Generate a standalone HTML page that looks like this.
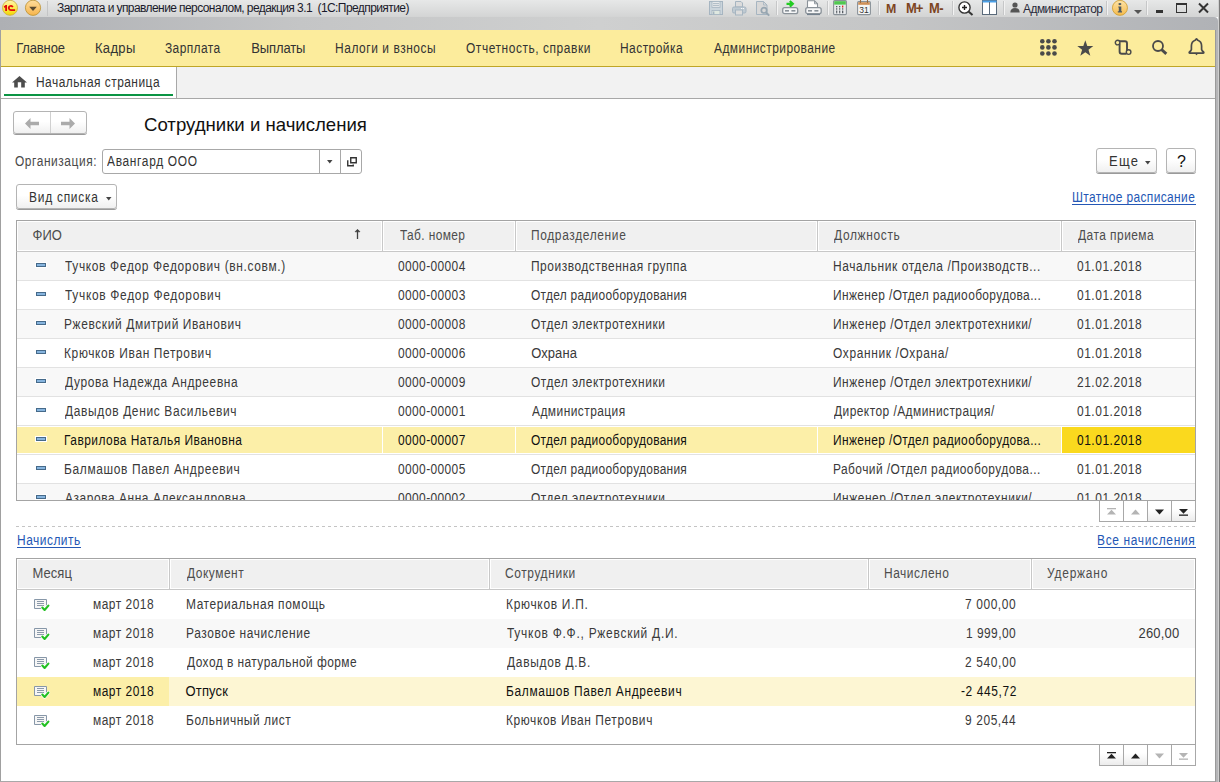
<!DOCTYPE html><html><head><meta charset="utf-8"><style>
*{box-sizing:border-box}
html,body{margin:0;padding:0}
body{width:1220px;height:782px;overflow:hidden;position:relative;background:#fff;font-family:"Liberation Sans",sans-serif}
.t{position:absolute;white-space:nowrap;line-height:15px}
.s{transform:scale(0.92,1.1);transform-origin:0 12px}
.s1{transform:scaleY(1.1);transform-origin:0 12px}
.a{position:absolute}
svg{position:absolute;overflow:visible}
</style></head><body>
<div style="position:absolute;left:0px;top:0px;width:1219px;height:17px;background:linear-gradient(#e7e8e8,#d3d4d4)"></div>
<div style="position:absolute;left:0px;top:17px;width:1218px;height:13px;background:linear-gradient(90deg,#aeb0b4 0px,#c4c5c6 300px,#cfd0d0 600px,#c4c5c6 900px,#b0b2b6 100%);border-top-right-radius:4px"></div>
<svg style="left:0;top:0" width="42" height="18" viewBox="0 0 42 18"><defs><linearGradient id="g1" x1="0" y1="0" x2="0" y2="1"><stop offset="0" stop-color="#fff6b0"/><stop offset="0.55" stop-color="#fbe94a"/><stop offset="1" stop-color="#f3d400"/></linearGradient><linearGradient id="g2" x1="0" y1="0" x2="0" y2="1"><stop offset="0" stop-color="#fddc9c"/><stop offset="1" stop-color="#f7b54c"/></linearGradient></defs><circle cx="10" cy="7.8" r="7.5" fill="url(#g1)" stroke="#cdb248" stroke-width="0.9"/><path d="M3.8 6.5 L5.6 5.1 H7 V10.9 H5.2 V7.3 L4.4 7.9 Z" fill="#e00a0a"/><path d="M12.8 7.1 A2.1 2.1 0 1 0 11 10.1 H15.1" stroke="#e00a0a" stroke-width="1.8" fill="none"/><circle cx="33" cy="7.8" r="7.6" fill="url(#g2)" stroke="#bf973c" stroke-width="0.9"/><path d="M29.2 6.8 L36.8 6.8 L33 10.9 Z" fill="#594a30"/></svg>
<div style="position:absolute;left:47px;top:1px;width:1px;height:15px;background:#c4c5c6"></div>
<div class="t" style="left:57px;top:1px;font-size:12px;color:#1a1a2a;letter-spacing:-0.58px">Зарплата и управление персоналом, редакция 3.1&nbsp;&nbsp;(1С:Предприятие)</div>
<div style="position:absolute;left:1px;top:30px;width:1214px;height:36px;background:#fcec9c"></div>
<div style="position:absolute;left:1px;top:66px;width:1214px;height:1px;background:#bfa626"></div>
<div class="t s1" style="left:16.2px;top:41px;font-size:13px;color:#333;letter-spacing:-0.150px;">Главное</div>
<div class="t s1" style="left:94.9px;top:41px;font-size:13px;color:#333;letter-spacing:0.350px;">Кадры</div>
<div class="t s" style="left:165.18px;top:41px;font-size:13px;color:#333;letter-spacing:0.432px;">Зарплата</div>
<div class="t s1" style="left:251.3px;top:41px;font-size:13px;color:#333;letter-spacing:-0.133px;">Выплаты</div>
<div class="t s" style="left:335.48px;top:41px;font-size:13px;color:#333;letter-spacing:0.599px;">Налоги и взносы</div>
<div class="t s" style="left:466.08px;top:41px;font-size:13px;color:#333;letter-spacing:0.607px;">Отчетность, справки</div>
<div class="t s" style="left:620.18px;top:41px;font-size:13px;color:#333;letter-spacing:0.508px;">Настройка</div>
<div class="t s" style="left:714.0px;top:41px;font-size:13px;color:#333;letter-spacing:0.484px;">Администрирование</div>
<div style="position:absolute;left:1px;top:67px;width:1214px;height:31px;background:#f2f2f2"></div>
<div style="position:absolute;left:1px;top:67px;width:175px;height:31px;background:#fff"></div>
<div style="position:absolute;left:176px;top:67px;width:1px;height:31px;background:#a8a8a8"></div>
<div style="position:absolute;left:1px;top:98px;width:1214px;height:1px;background:#a8a8a8"></div>
<div style="position:absolute;left:4px;top:94px;width:169px;height:2px;background:#0b9444"></div>
<div class="t s" style="left:36.28px;top:75px;font-size:13px;color:#333;letter-spacing:0.499px;">Начальная страница</div>
<svg style="left:12px;top:76px" width="16" height="12" viewBox="0 0 16 12"><path d="M0 6.6 L7.5 0 L15 6.6 H12.8 V11.6 H9.2 V6.2 H5.8 V11.6 H2.2 V6.6 Z" fill="#4d4d4d"/></svg><div style="position:absolute;left:0px;top:30px;width:1px;height:752px;background:#a0a0a0"></div>
<div style="position:absolute;left:0px;top:781px;width:1220px;height:1px;background:#a8a8a8"></div>
<div style="position:absolute;left:1215px;top:30px;width:1px;height:752px;background:#9a9a9a"></div>
<div style="position:absolute;left:1216px;top:30px;width:2px;height:752px;background:#b5b5b7"></div>
<div style="position:absolute;left:1218px;top:0px;width:1px;height:782px;background:#cfcfcf"></div>
<div style="position:absolute;left:1219px;top:0px;width:1px;height:782px;background:#7a7a7a"></div>
<svg style="left:709px;top:1px" width="14" height="14" viewBox="0 0 14 14"><rect x="0.5" y="0.5" width="13" height="13" fill="#cbd5dc" stroke="#a6b5c1"/><rect x="3" y="0.5" width="8" height="6" fill="#e6e9eb" stroke="#a6b5c1" stroke-width="0.8"/><path d="M4 2.6 H10 M4 4.6 H10" stroke="#a6b5c1" stroke-width="0.9"/><rect x="3" y="9.5" width="8" height="4" fill="#dfe8e0" stroke="#a6b5c1" stroke-width="0.8"/><rect x="4" y="10.5" width="1.4" height="3" fill="#a6b5c1"/></svg><svg style="left:732px;top:1px" width="15" height="15" viewBox="0 0 15 15"><path d="M3.5 0.5 H9 L10.5 2 V6 H3.5 Z" fill="#dcdcdc" stroke="#a6b5c1"/><rect x="0.5" y="6" width="13.5" height="6" rx="1.5" fill="#bfcad2" stroke="#a6b5c1"/><rect x="3.5" y="9" width="7" height="5" fill="#dcdcdc" stroke="#a6b5c1"/><rect x="9" y="7" width="1.2" height="0.9" fill="#fff"/><rect x="10.8" y="7" width="1.2" height="0.9" fill="#fff"/></svg><svg style="left:756px;top:1px" width="15" height="16" viewBox="0 0 15 16"><path d="M0.5 0.5 H7.5 L11 4 V13.5 H0.5 Z" fill="#d8d8d8" stroke="#a6b5c1"/><path d="M7.5 0.5 V4 H11" fill="none" stroke="#a6b5c1" stroke-width="0.8"/><circle cx="8" cy="9.3" r="2.7" fill="#d8d8d8" stroke="#97a6b1" stroke-width="1.7"/><path d="M9.8 11.2 L13.2 14.6" stroke="#97a6b1" stroke-width="2"/></svg><div style="position:absolute;left:776px;top:1px;width:1px;height:14px;background:#c6c7c8;box-shadow:1px 0 0 #f2f2f2"></div>
<svg style="left:782px;top:0px" width="17" height="16" viewBox="0 0 17 16"><path d="M4.5 3.8 H10 M7.8 1 L10.8 3.8 L7.8 6.6" stroke="#22cc22" stroke-width="2.2" fill="none"/><rect x="0.7" y="7.7" width="15" height="6" rx="2" fill="#f4f5f6" stroke="#8a9299" stroke-width="1.3"/><rect x="3" y="10" width="4" height="1.6" fill="#8a9299"/><rect x="9.4" y="10" width="4" height="1.6" fill="#8a9299"/></svg><svg style="left:805px;top:0px" width="17" height="16" viewBox="0 0 17 16"><path d="M2.5 0.8 H9.5 L12.5 3.8 V8 H2.5 Z" fill="#fff" stroke="#8a9299" stroke-width="1.1"/><path d="M9.5 0.8 V3.8 H12.5" fill="none" stroke="#8a9299" stroke-width="0.9"/><rect x="0.7" y="7.7" width="15.5" height="6" rx="2" fill="#f4f5f6" stroke="#8a9299" stroke-width="1.3"/><rect x="3" y="10" width="4" height="1.6" fill="#8a9299"/><rect x="9.4" y="10" width="4" height="1.6" fill="#8a9299"/><path d="M2 14.6 H15" stroke="#6a7a88" stroke-width="1"/></svg><div style="position:absolute;left:827px;top:1px;width:1px;height:14px;background:#c6c7c8;box-shadow:1px 0 0 #f2f2f2"></div>
<svg style="left:833px;top:0px" width="14" height="16" viewBox="0 0 14 16"><rect x="0.6" y="0.6" width="12.8" height="14" rx="1" fill="#e8eaec" stroke="#8a9299" stroke-width="1.1"/><rect x="1.2" y="1.2" width="11.6" height="3.4" fill="#50c850"/><g fill="#555b62"><rect x="3" y="6" width="1.3" height="1.3"/><rect x="6" y="6" width="1.3" height="1.3"/><rect x="3" y="8.3" width="1.3" height="1.3"/><rect x="6" y="8.3" width="1.3" height="1.3"/><rect x="9" y="8.3" width="1.3" height="1.3"/><rect x="3" y="10.6" width="1.3" height="1.3"/><rect x="6" y="10.6" width="1.3" height="1.3"/><rect x="9" y="10.6" width="1.3" height="2.6"/><rect x="3" y="12.2" width="1.3" height="1.1"/><rect x="6" y="12.2" width="1.3" height="1.1"/></g><rect x="9" y="5.6" width="1.3" height="1.9" fill="#e02020"/></svg><svg style="left:857px;top:0px" width="14" height="16" viewBox="0 0 14 16"><rect x="0.6" y="1.6" width="12.8" height="13" rx="1" fill="#f6f6f6" stroke="#8a9299" stroke-width="1.1"/><rect x="1.2" y="2.2" width="11.6" height="2.6" fill="#cf9058"/><path d="M3.5 0 V3 M10.5 0 V3" stroke="#9a6a40" stroke-width="1.1"/><text x="7" y="13" font-size="8.5" font-family="Liberation Sans" text-anchor="middle" fill="#333">31</text></svg><div style="position:absolute;left:878px;top:1px;width:1px;height:14px;background:#c6c7c8;box-shadow:1px 0 0 #f2f2f2"></div>
<div class="t s1" style="left:886px;top:1px;font-size:13px;color:#7d4522;font-weight:bold;transform:scaleX(0.95);transform-origin:0 0">M</div>
<div class="t s1" style="left:906px;top:1px;font-size:13px;color:#7d4522;font-weight:bold;letter-spacing:-1px">M+</div>
<div class="t s1" style="left:929px;top:1px;font-size:13px;color:#7d4522;font-weight:bold;letter-spacing:-0.5px">M-</div>
<div style="position:absolute;left:952px;top:1px;width:1px;height:14px;background:#c6c7c8;box-shadow:1px 0 0 #f2f2f2"></div>
<svg style="left:958px;top:1px" width="16" height="15" viewBox="0 0 16 15"><circle cx="6.5" cy="6.5" r="5.6" fill="#fff" stroke="#333" stroke-width="1.4"/><path d="M4 6.5 H9 M6.5 4 V9" stroke="#222" stroke-width="1.4"/><path d="M10.5 10.5 L14.5 14" stroke="#333" stroke-width="2"/></svg><svg style="left:982px;top:0px" width="15" height="15" viewBox="0 0 15 15"><rect x="0.5" y="0.5" width="14" height="14" fill="#fff" stroke="#5a6a7a"/><rect x="0.5" y="0.5" width="14" height="2" fill="#4aa0e8"/><path d="M7.5 2 V14.5" stroke="#5a6a7a"/></svg><div style="position:absolute;left:1003px;top:1px;width:1px;height:14px;background:#c6c7c8;box-shadow:1px 0 0 #f2f2f2"></div>
<svg style="left:1010px;top:2px" width="10" height="11" viewBox="0 0 10 11"><circle cx="5" cy="3" r="2.6" fill="#555"/><path d="M0.3 10.5 Q0.5 6 5 6 Q9.5 6 9.7 10.5 Z" fill="#555"/></svg><div class="t" style="left:1023px;top:2px;font-size:12px;color:#2a2a3a;letter-spacing:-0.55px">Администратор</div>
<div style="position:absolute;left:1106px;top:1px;width:1px;height:14px;background:#c6c7c8;box-shadow:1px 0 0 #f2f2f2"></div>
<svg style="left:1112px;top:0px" width="17" height="17" viewBox="0 0 17 17"><defs><linearGradient id="g3" x1="0" y1="0" x2="0" y2="1"><stop offset="0" stop-color="#fde3a8"/><stop offset="1" stop-color="#f6bb4c"/></linearGradient></defs><circle cx="7.95" cy="7.85" r="7.5" fill="url(#g3)" stroke="#cfa23a" stroke-width="0.9"/><ellipse cx="7.9" cy="4.1" rx="1.5" ry="1.1" fill="#4e5a62"/><path d="M6.3 6.6 H9.3 V11.3 H10 V12.6 H5.8 V11.3 H6.8 V7.6 H6.3 Z" fill="#4e5a62"/></svg><svg style="left:1134px;top:10px" width="9" height="5" viewBox="0 0 9 5"><path d="M0 0 H8 L4 4 Z" fill="#555"/></svg><div style="position:absolute;left:1146px;top:1px;width:1px;height:14px;background:#c6c7c8;box-shadow:1px 0 0 #f2f2f2"></div>
<div style="position:absolute;left:1156px;top:10px;width:7px;height:3px;background:#333"></div>
<div style="position:absolute;left:1176px;top:3px;width:11px;height:10px;border:1.5px solid #333;border-top-width:2px"></div>
<svg style="left:1198px;top:3px" width="11" height="10" viewBox="0 0 11 10"><path d="M1 0.5 L10 9.5 M10 0.5 L1 9.5" stroke="#333" stroke-width="2"/></svg><svg style="left:1040px;top:39px" width="17" height="17" viewBox="0 0 17 17"><circle cx="2.3" cy="2.3" r="2.3" fill="#4a4a4a"/><circle cx="2.3" cy="8.399999999999999" r="2.3" fill="#4a4a4a"/><circle cx="2.3" cy="14.5" r="2.3" fill="#4a4a4a"/><circle cx="8.399999999999999" cy="2.3" r="2.3" fill="#4a4a4a"/><circle cx="8.399999999999999" cy="8.399999999999999" r="2.3" fill="#4a4a4a"/><circle cx="8.399999999999999" cy="14.5" r="2.3" fill="#4a4a4a"/><circle cx="14.5" cy="2.3" r="2.3" fill="#4a4a4a"/><circle cx="14.5" cy="8.399999999999999" r="2.3" fill="#4a4a4a"/><circle cx="14.5" cy="14.5" r="2.3" fill="#4a4a4a"/></svg><svg style="left:1077px;top:40px" width="17" height="17" viewBox="0 0 17 17"><path d="M8.3 0.3 L10.3 6 L16.3 6.1 L11.5 9.8 L13.3 15.8 L8.3 12.2 L3.3 15.8 L5.1 9.8 L0.3 6.1 L6.3 6 Z" fill="#4a4a4a"/></svg><svg style="left:1114px;top:39px" width="18" height="17" viewBox="0 0 18 17"><path d="M4 2.3 H11 Q13 2.3 13 4.3 V11.5" fill="none" stroke="#4a4a4a" stroke-width="1.9"/><path d="M5.6 4.5 V12.5 Q5.6 14.8 7.8 14.8 H12.5" fill="none" stroke="#4a4a4a" stroke-width="1.9"/><circle cx="3.6" cy="3.6" r="2.3" fill="#fcec9c" stroke="#4a4a4a" stroke-width="1.4"/><circle cx="14.6" cy="13.1" r="2.3" fill="#fcec9c" stroke="#4a4a4a" stroke-width="1.4"/></svg><svg style="left:1152px;top:40px" width="16" height="16" viewBox="0 0 16 16"><circle cx="6" cy="6" r="5" fill="none" stroke="#4a4a4a" stroke-width="1.8"/><path d="M9.5 9.5 L14.3 13.8" stroke="#4a4a4a" stroke-width="3"/></svg><svg style="left:1189px;top:38px" width="16" height="18" viewBox="0 0 16 18"><path d="M7.5 0.8 L8.8 2.2 Q12.6 3.3 12.6 8 V11.5 Q13 13 14.6 14 Q15.2 15 14 15.2 H1 Q-0.2 15 0.4 14 Q2 13 2.4 11.5 V8 Q2.4 3.3 6.2 2.2 Z" fill="none" stroke="#4a4a4a" stroke-width="1.7" stroke-linejoin="round"/><path d="M5.8 15.5 L7.5 17.2 L9.2 15.5 Z" fill="#4a4a4a"/></svg><div style="position:absolute;left:13px;top:111px;width:74px;height:23px;border:1px solid #b4b4b4;border-radius:3px;background:linear-gradient(#fff 0%,#fff 45%,#f0f0f0 100%);box-shadow:0 1px 0 #9a9a9a"></div>
<div style="position:absolute;left:50px;top:112px;width:1px;height:21px;background:#d0d0d0"></div>
<svg style="left:25px;top:118px" width="15" height="11" viewBox="0 0 15 11"><path d="M0 5.5 L5.5 0 V3.8 H14 V7.2 H5.5 V11 Z" fill="#ababab"/></svg><svg style="left:60px;top:118px" width="15" height="11" viewBox="0 0 15 11"><path d="M15 5.5 L9.5 0 V3.8 H1 V7.2 H9.5 V11 Z" fill="#ababab"/></svg><div class="t" style="left:144px;top:114px;font-size:18.6px;color:#111;line-height:21px">Сотрудники и начисления</div>
<div class="t s" style="left:15.38px;top:154px;font-size:13px;color:#4a4a4a;letter-spacing:0.603px;">Организация:</div>
<div style="position:absolute;left:102px;top:149px;width:260px;height:25px;border:1px solid #a8a8a8;border-radius:3px;background:#fff"></div>
<div style="position:absolute;left:319px;top:150px;width:1px;height:23px;background:#a8a8a8"></div>
<div style="position:absolute;left:340px;top:150px;width:1px;height:23px;background:#a8a8a8"></div>
<div class="t s" style="left:106.6px;top:154px;font-size:13px;color:#333;letter-spacing:0.721px;">Авангард ООО</div>
<svg style="left:327px;top:160px" width="6" height="4" viewBox="0 0 6 4"><path d="M0 0 H5.5 L2.75 3.5 Z" fill="#444"/></svg><svg style="left:347px;top:157px" width="10" height="10" viewBox="0 0 10 10"><path d="M3.75 0.75 H9.25 V5.75 H3.75 Z M0.75 3.2 V8.75 H6.25 V7.6" fill="none" stroke="#333" stroke-width="1.4"/></svg><div style="position:absolute;left:16px;top:184px;width:101px;height:25px;border:1px solid #b4b4b4;border-radius:3px;background:linear-gradient(#fff 0%,#fff 45%,#f0f0f0 100%);box-shadow:0 1px 0 #9a9a9a"></div>
<div class="t s" style="left:29.18px;top:190px;font-size:13px;color:#333;letter-spacing:0.804px;">Вид списка</div>
<svg style="left:106px;top:197px" width="6" height="4" viewBox="0 0 6 4"><path d="M0 0 H5.5 L2.75 3.5 Z" fill="#444"/></svg><div style="position:absolute;left:1096px;top:148px;width:61px;height:25px;border:1px solid #b4b4b4;border-radius:3px;background:linear-gradient(#fff 0%,#fff 45%,#f0f0f0 100%);box-shadow:0 1px 0 #9a9a9a"></div>
<div class="t s1" style="left:1109.0px;top:154px;font-size:13px;color:#333;letter-spacing:1.250px;">Еще</div>
<svg style="left:1145px;top:161px" width="6" height="4" viewBox="0 0 6 4"><path d="M0 0 H5.5 L2.75 3.5 Z" fill="#444"/></svg><div style="position:absolute;left:1166px;top:148px;width:30px;height:25px;border:1px solid #b4b4b4;border-radius:3px;background:linear-gradient(#fff 0%,#fff 45%,#f0f0f0 100%);box-shadow:0 1px 0 #9a9a9a"></div>
<div class="t" style="left:1177px;top:153px;font-size:16px;color:#111;line-height:18px">?</div>
<div class="t s" style="left:1071.68px;top:190px;font-size:13px;color:#2457b5;letter-spacing:0.409px;">Штатное расписание</div>
<div style="position:absolute;left:1072px;top:204px;width:124px;height:1px;background:#2457b5"></div>
<div style="position:absolute;left:16px;top:220px;width:1180px;height:32px;border:1px solid #a4a4a4;border-bottom-color:#c8c8c8;background:#fff"></div>
<div style="position:absolute;left:18px;top:222px;width:363px;height:28px;background:#f0f0f0"></div>
<div style="position:absolute;left:384px;top:222px;width:130px;height:28px;background:#f0f0f0"></div>
<div style="position:absolute;left:517px;top:222px;width:299px;height:28px;background:#f0f0f0"></div>
<div style="position:absolute;left:819px;top:222px;width:241px;height:28px;background:#f0f0f0"></div>
<div style="position:absolute;left:1063px;top:222px;width:131px;height:28px;background:#f0f0f0"></div>
<div style="position:absolute;left:382px;top:221px;width:1px;height:30px;background:#c8c8c8"></div>
<div style="position:absolute;left:515px;top:221px;width:1px;height:30px;background:#c8c8c8"></div>
<div style="position:absolute;left:817px;top:221px;width:1px;height:30px;background:#c8c8c8"></div>
<div style="position:absolute;left:1061px;top:221px;width:1px;height:30px;background:#c8c8c8"></div>
<div class="t s1" style="left:32.5px;top:228px;font-size:13px;color:#4d4d4d;letter-spacing:0.000px;">ФИО</div>
<div class="t s" style="left:399.5px;top:228px;font-size:13px;color:#4d4d4d;letter-spacing:0.382px;">Таб. номер</div>
<div class="t s" style="left:531.18px;top:228px;font-size:13px;color:#4d4d4d;letter-spacing:0.692px;">Подразделение</div>
<div class="t s" style="left:833.7px;top:228px;font-size:13px;color:#4d4d4d;letter-spacing:0.720px;">Должность</div>
<div class="t s" style="left:1078.1px;top:228px;font-size:13px;color:#4d4d4d;letter-spacing:0.496px;">Дата приема</div>
<svg style="left:355px;top:229px" width="5" height="11" viewBox="0 0 5 11"><path d="M2.5 1 V10" stroke="#404040" stroke-width="1.3"/><path d="M0 2.8 L2.5 0.3 L5 2.8 Z" fill="#404040" stroke="#404040" stroke-width="0.6" stroke-linejoin="round"/></svg><div style="position:absolute;left:16px;top:252px;width:1px;height:249px;background:#a4a4a4"></div>
<div style="position:absolute;left:1195px;top:252px;width:1px;height:249px;background:#a4a4a4"></div>
<div class="a" style="left:0;top:252px;width:1220px;height:248px;overflow:hidden"><div style="position:absolute;left:17px;top:-252px;margin-top:252px;width:1178px;height:28px;background:#f8f8f8"></div>
<div style="position:absolute;left:17px;top:-252px;margin-top:280px;width:1178px;height:1px;background:#e2e2e2"></div>
<div style="position:absolute;left:36px;top:-252px;margin-top:263px;width:10px;height:4px;background:#86b4de;border:1px solid #466a8a;box-shadow:0 0 0 1px #fff"></div>
<div class="t s" style="left:65.0px;top:-252px;margin-top:259px;font-size:13px;color:#3a3a3a;letter-spacing:0.709px;">Тучков Федор Федорович (вн.совм.)</div>
<div class="t s" style="left:398.48px;top:-252px;margin-top:259px;font-size:13px;color:#3a3a3a;letter-spacing:0.415px;">0000-00004</div>
<div class="t s" style="left:531.18px;top:-252px;margin-top:259px;font-size:13px;color:#3a3a3a;letter-spacing:0.567px;">Производственная группа</div>
<div class="t s" style="left:832.78px;top:-252px;margin-top:259px;font-size:13px;color:#3a3a3a;letter-spacing:0.628px;">Начальник отдела /Производств...</div>
<div class="t s" style="left:1077.18px;top:-252px;margin-top:259px;font-size:13px;color:#3a3a3a;letter-spacing:0.582px;">01.01.2018</div>
<div style="position:absolute;left:17px;top:-252px;margin-top:281px;width:1178px;height:28px;background:#fff"></div>
<div style="position:absolute;left:17px;top:-252px;margin-top:309px;width:1178px;height:1px;background:#e2e2e2"></div>
<div style="position:absolute;left:36px;top:-252px;margin-top:292px;width:10px;height:4px;background:#86b4de;border:1px solid #466a8a;box-shadow:0 0 0 1px #fff"></div>
<div class="t s" style="left:65.0px;top:-252px;margin-top:288px;font-size:13px;color:#3a3a3a;letter-spacing:0.742px;">Тучков Федор Федорович</div>
<div class="t s" style="left:398.48px;top:-252px;margin-top:288px;font-size:13px;color:#3a3a3a;letter-spacing:0.415px;">0000-00003</div>
<div class="t s" style="left:531.38px;top:-252px;margin-top:288px;font-size:13px;color:#3a3a3a;letter-spacing:0.286px;">Отдел радиооборудования</div>
<div class="t s" style="left:832.78px;top:-252px;margin-top:288px;font-size:13px;color:#3a3a3a;letter-spacing:0.391px;">Инженер /Отдел радиооборудова...</div>
<div class="t s" style="left:1077.18px;top:-252px;margin-top:288px;font-size:13px;color:#3a3a3a;letter-spacing:0.582px;">01.01.2018</div>
<div style="position:absolute;left:17px;top:-252px;margin-top:310px;width:1178px;height:28px;background:#f8f8f8"></div>
<div style="position:absolute;left:17px;top:-252px;margin-top:338px;width:1178px;height:1px;background:#e2e2e2"></div>
<div style="position:absolute;left:36px;top:-252px;margin-top:321px;width:10px;height:4px;background:#86b4de;border:1px solid #466a8a;box-shadow:0 0 0 1px #fff"></div>
<div class="t s" style="left:64.08px;top:-252px;margin-top:317px;font-size:13px;color:#3a3a3a;letter-spacing:0.657px;">Ржевский Дмитрий Иванович</div>
<div class="t s" style="left:398.48px;top:-252px;margin-top:317px;font-size:13px;color:#3a3a3a;letter-spacing:0.415px;">0000-00008</div>
<div class="t s" style="left:531.38px;top:-252px;margin-top:317px;font-size:13px;color:#3a3a3a;letter-spacing:0.551px;">Отдел электротехники</div>
<div class="t s" style="left:832.78px;top:-252px;margin-top:317px;font-size:13px;color:#3a3a3a;letter-spacing:0.552px;">Инженер /Отдел электротехники/</div>
<div class="t s" style="left:1077.18px;top:-252px;margin-top:317px;font-size:13px;color:#3a3a3a;letter-spacing:0.582px;">01.01.2018</div>
<div style="position:absolute;left:17px;top:-252px;margin-top:339px;width:1178px;height:28px;background:#fff"></div>
<div style="position:absolute;left:17px;top:-252px;margin-top:367px;width:1178px;height:1px;background:#e2e2e2"></div>
<div style="position:absolute;left:36px;top:-252px;margin-top:350px;width:10px;height:4px;background:#86b4de;border:1px solid #466a8a;box-shadow:0 0 0 1px #fff"></div>
<div class="t s" style="left:64.08px;top:-252px;margin-top:346px;font-size:13px;color:#3a3a3a;letter-spacing:0.686px;">Крючков Иван Петрович</div>
<div class="t s" style="left:398.48px;top:-252px;margin-top:346px;font-size:13px;color:#3a3a3a;letter-spacing:0.415px;">0000-00006</div>
<div class="t s1" style="left:531.2px;top:-252px;margin-top:346px;font-size:13px;color:#3a3a3a;letter-spacing:0.080px;">Охрана</div>
<div class="t s" style="left:833.38px;top:-252px;margin-top:346px;font-size:13px;color:#3a3a3a;letter-spacing:0.682px;">Охранник /Охрана/</div>
<div class="t s" style="left:1077.18px;top:-252px;margin-top:346px;font-size:13px;color:#3a3a3a;letter-spacing:0.582px;">01.01.2018</div>
<div style="position:absolute;left:17px;top:-252px;margin-top:368px;width:1178px;height:28px;background:#f8f8f8"></div>
<div style="position:absolute;left:17px;top:-252px;margin-top:396px;width:1178px;height:1px;background:#e2e2e2"></div>
<div style="position:absolute;left:36px;top:-252px;margin-top:379px;width:10px;height:4px;background:#86b4de;border:1px solid #466a8a;box-shadow:0 0 0 1px #fff"></div>
<div class="t s" style="left:65.0px;top:-252px;margin-top:375px;font-size:13px;color:#3a3a3a;letter-spacing:0.669px;">Дурова Надежда Андреевна</div>
<div class="t s" style="left:398.48px;top:-252px;margin-top:375px;font-size:13px;color:#3a3a3a;letter-spacing:0.415px;">0000-00009</div>
<div class="t s" style="left:531.38px;top:-252px;margin-top:375px;font-size:13px;color:#3a3a3a;letter-spacing:0.551px;">Отдел электротехники</div>
<div class="t s" style="left:832.78px;top:-252px;margin-top:375px;font-size:13px;color:#3a3a3a;letter-spacing:0.552px;">Инженер /Отдел электротехники/</div>
<div class="t s" style="left:1077.18px;top:-252px;margin-top:375px;font-size:13px;color:#3a3a3a;letter-spacing:0.582px;">21.02.2018</div>
<div style="position:absolute;left:17px;top:-252px;margin-top:397px;width:1178px;height:28px;background:#fff"></div>
<div style="position:absolute;left:17px;top:-252px;margin-top:425px;width:1178px;height:1px;background:#e2e2e2"></div>
<div style="position:absolute;left:36px;top:-252px;margin-top:408px;width:10px;height:4px;background:#86b4de;border:1px solid #466a8a;box-shadow:0 0 0 1px #fff"></div>
<div class="t s" style="left:65.0px;top:-252px;margin-top:404px;font-size:13px;color:#3a3a3a;letter-spacing:0.696px;">Давыдов Денис Васильевич</div>
<div class="t s" style="left:398.48px;top:-252px;margin-top:404px;font-size:13px;color:#3a3a3a;letter-spacing:0.415px;">0000-00001</div>
<div class="t s" style="left:532.3px;top:-252px;margin-top:404px;font-size:13px;color:#3a3a3a;letter-spacing:0.480px;">Администрация</div>
<div class="t s" style="left:833.7px;top:-252px;margin-top:404px;font-size:13px;color:#3a3a3a;letter-spacing:0.484px;">Директор /Администрация/</div>
<div class="t s" style="left:1077.18px;top:-252px;margin-top:404px;font-size:13px;color:#3a3a3a;letter-spacing:0.582px;">01.01.2018</div>
<div style="position:absolute;left:17px;top:-252px;margin-top:426px;width:1178px;height:28px;background:#fff"></div>
<div style="position:absolute;left:17px;top:-252px;margin-top:427px;width:365px;height:26px;background:#fcefa8"></div>
<div style="position:absolute;left:383px;top:-252px;margin-top:427px;width:132px;height:26px;background:#fcefa8"></div>
<div style="position:absolute;left:516px;top:-252px;margin-top:427px;width:301px;height:26px;background:#fcefa8"></div>
<div style="position:absolute;left:818px;top:-252px;margin-top:427px;width:243px;height:26px;background:#fcefa8"></div>
<div style="position:absolute;left:1062px;top:-252px;margin-top:427px;width:133px;height:26px;background:#fad91e"></div>
<div style="position:absolute;left:17px;top:-252px;margin-top:454px;width:1178px;height:1px;background:#e2e2e2"></div>
<div style="position:absolute;left:36px;top:-252px;margin-top:437px;width:10px;height:4px;background:#86b4de;border:1px solid #466a8a;box-shadow:0 0 0 1px #fff"></div>
<div class="t s" style="left:64.08px;top:-252px;margin-top:433px;font-size:13px;color:#111;letter-spacing:0.500px;">Гаврилова Наталья Ивановна</div>
<div class="t s" style="left:398.48px;top:-252px;margin-top:433px;font-size:13px;color:#111;letter-spacing:0.415px;">0000-00007</div>
<div class="t s" style="left:531.38px;top:-252px;margin-top:433px;font-size:13px;color:#111;letter-spacing:0.286px;">Отдел радиооборудования</div>
<div class="t s" style="left:832.78px;top:-252px;margin-top:433px;font-size:13px;color:#111;letter-spacing:0.391px;">Инженер /Отдел радиооборудова...</div>
<div class="t s" style="left:1077.18px;top:-252px;margin-top:433px;font-size:13px;color:#111;letter-spacing:0.582px;">01.01.2018</div>
<div style="position:absolute;left:17px;top:-252px;margin-top:455px;width:1178px;height:28px;background:#fff"></div>
<div style="position:absolute;left:17px;top:-252px;margin-top:483px;width:1178px;height:1px;background:#e2e2e2"></div>
<div style="position:absolute;left:36px;top:-252px;margin-top:466px;width:10px;height:4px;background:#86b4de;border:1px solid #466a8a;box-shadow:0 0 0 1px #fff"></div>
<div class="t s" style="left:64.08px;top:-252px;margin-top:462px;font-size:13px;color:#3a3a3a;letter-spacing:0.697px;">Балмашов Павел Андреевич</div>
<div class="t s" style="left:398.48px;top:-252px;margin-top:462px;font-size:13px;color:#3a3a3a;letter-spacing:0.415px;">0000-00005</div>
<div class="t s" style="left:531.38px;top:-252px;margin-top:462px;font-size:13px;color:#3a3a3a;letter-spacing:0.286px;">Отдел радиооборудования</div>
<div class="t s" style="left:832.78px;top:-252px;margin-top:462px;font-size:13px;color:#3a3a3a;letter-spacing:0.467px;">Рабочий /Отдел радиооборудова...</div>
<div class="t s" style="left:1077.18px;top:-252px;margin-top:462px;font-size:13px;color:#3a3a3a;letter-spacing:0.582px;">01.01.2018</div>
<div style="position:absolute;left:17px;top:-252px;margin-top:484px;width:1178px;height:28px;background:#f8f8f8"></div>
<div style="position:absolute;left:17px;top:-252px;margin-top:512px;width:1178px;height:1px;background:#e2e2e2"></div>
<div style="position:absolute;left:36px;top:-252px;margin-top:495px;width:10px;height:4px;background:#86b4de;border:1px solid #466a8a;box-shadow:0 0 0 1px #fff"></div>
<div class="t s" style="left:65.0px;top:-252px;margin-top:491px;font-size:13px;color:#3a3a3a;letter-spacing:0.595px;">Азарова Анна Александровна</div>
<div class="t s" style="left:398.48px;top:-252px;margin-top:491px;font-size:13px;color:#3a3a3a;letter-spacing:0.415px;">0000-00002</div>
<div class="t s" style="left:531.38px;top:-252px;margin-top:491px;font-size:13px;color:#3a3a3a;letter-spacing:0.551px;">Отдел электротехники</div>
<div class="t s" style="left:832.78px;top:-252px;margin-top:491px;font-size:13px;color:#3a3a3a;letter-spacing:0.552px;">Инженер /Отдел электротехники/</div>
<div class="t s" style="left:1077.18px;top:-252px;margin-top:491px;font-size:13px;color:#3a3a3a;letter-spacing:0.582px;">01.01.2018</div>
</div><div style="position:absolute;left:16px;top:500px;width:1180px;height:1px;background:#a4a4a4"></div>
<div style="position:absolute;left:1099px;top:501px;width:97px;height:21px;border:1px solid #a8a8a8;border-top:none;background:#fff"></div>
<div style="position:absolute;left:1148px;top:501px;width:23px;height:20px;background:linear-gradient(#fff 40%,#ececec)"></div>
<div style="position:absolute;left:1172px;top:501px;width:23px;height:20px;background:linear-gradient(#fff 40%,#ececec)"></div>
<div style="position:absolute;left:1123px;top:501px;width:1px;height:20px;background:#a8a8a8"></div>
<div style="position:absolute;left:1147px;top:501px;width:1px;height:20px;background:#a8a8a8"></div>
<div style="position:absolute;left:1171px;top:501px;width:1px;height:20px;background:#a8a8a8"></div>
<svg style="left:1107px;top:508px" width="10" height="7" viewBox="0 0 10 7"><rect x="0" y="0" width="9" height="1.3" fill="#b4b4b4"/><path d="M0 6.5 L4.5 1.8 L9 6.5 Z" fill="#b4b4b4"/></svg><svg style="left:1131px;top:509px" width="10" height="6" viewBox="0 0 10 6"><path d="M0 5.5 L4.5 0.5 L9 5.5 Z" fill="#b4b4b4"/></svg><svg style="left:1155px;top:509px" width="10" height="6" viewBox="0 0 10 6"><path d="M0 0.5 L4.5 5.5 L9 0.5 Z" fill="#222"/></svg><svg style="left:1179px;top:509px" width="10" height="7" viewBox="0 0 10 7"><path d="M0 0 L4.5 4.7 L9 0 Z" fill="#222"/><rect x="0" y="5.5" width="9" height="1.3" fill="#222"/></svg><div style="position:absolute;left:16px;top:526px;width:1180px;height:1px;background:repeating-linear-gradient(90deg,#c4c4c4 0 3px,transparent 3px 6px)"></div>
<div class="t s" style="left:16.78px;top:533px;font-size:13px;color:#2457b5;letter-spacing:0.535px;">Начислить</div>
<div style="position:absolute;left:17px;top:547px;width:64px;height:1px;background:#2457b5"></div>
<div class="t s" style="left:1097.48px;top:533px;font-size:13px;color:#2457b5;letter-spacing:0.711px;">Все начисления</div>
<div style="position:absolute;left:1098px;top:547px;width:98px;height:1px;background:#2457b5"></div>
<div style="position:absolute;left:16px;top:558px;width:1180px;height:32px;border:1px solid #a4a4a4;border-bottom-color:#c8c8c8;background:#fff"></div>
<div style="position:absolute;left:18px;top:560px;width:150px;height:28px;background:#f0f0f0"></div>
<div style="position:absolute;left:171px;top:560px;width:317px;height:28px;background:#f0f0f0"></div>
<div style="position:absolute;left:491px;top:560px;width:376px;height:28px;background:#f0f0f0"></div>
<div style="position:absolute;left:870px;top:560px;width:160px;height:28px;background:#f0f0f0"></div>
<div style="position:absolute;left:1033px;top:560px;width:161px;height:28px;background:#f0f0f0"></div>
<div style="position:absolute;left:169px;top:559px;width:1px;height:30px;background:#c8c8c8"></div>
<div style="position:absolute;left:489px;top:559px;width:1px;height:30px;background:#c8c8c8"></div>
<div style="position:absolute;left:868px;top:559px;width:1px;height:30px;background:#c8c8c8"></div>
<div style="position:absolute;left:1031px;top:559px;width:1px;height:30px;background:#c8c8c8"></div>
<div class="t s1" style="left:32.5px;top:566px;font-size:13px;color:#4d4d4d;letter-spacing:0.050px;">Месяц</div>
<div class="t s" style="left:186.5px;top:566px;font-size:13px;color:#4d4d4d;letter-spacing:0.568px;">Документ</div>
<div class="t s" style="left:505.28px;top:566px;font-size:13px;color:#4d4d4d;letter-spacing:0.655px;">Сотрудники</div>
<div class="t s" style="left:884.28px;top:566px;font-size:13px;color:#4d4d4d;letter-spacing:0.543px;">Начислено</div>
<div class="t s" style="left:1046.58px;top:566px;font-size:13px;color:#4d4d4d;letter-spacing:0.845px;">Удержано</div>
<div style="position:absolute;left:16px;top:590px;width:1px;height:154px;background:#a4a4a4"></div>
<div style="position:absolute;left:1195px;top:590px;width:1px;height:154px;background:#a4a4a4"></div>
<div style="position:absolute;left:16px;top:744px;width:1180px;height:1px;background:#a4a4a4"></div>
<svg style="left:34px;top:599px" width="16" height="13" viewBox="0 0 16 13"><path d="M0.5 0.5 H12.5 V9.5 H0.5 Z" fill="#f6f6f6" stroke="#8797a8"/><path d="M3 2.5 H10 M3 4.5 H10 M3 6.5 H10" stroke="#8a99a9" stroke-width="1"/><path d="M8.3 8.6 L10.6 11 L14.4 6.6" fill="none" stroke="#fff" stroke-width="3.4" stroke-linecap="round" stroke-linejoin="round"/><path d="M8.3 8.6 L10.6 11 L14.4 6.6" fill="none" stroke="#22c022" stroke-width="2.1" stroke-linecap="round" stroke-linejoin="round"/></svg><div class="t s" style="left:93.38px;top:597px;font-size:13px;color:#3a3a3a;letter-spacing:0.530px;">март 2018</div>
<div class="t s" style="left:185.58px;top:597px;font-size:13px;color:#3a3a3a;letter-spacing:0.617px;">Материальная помощь</div>
<div class="t s" style="left:505.58px;top:597px;font-size:13px;color:#3a3a3a;letter-spacing:0.763px;">Крючков И.П.</div>
<div class="t s" style="left:965.48px;top:597px;font-size:13px;color:#3a3a3a;letter-spacing:0.640px;">7 000,00</div>
<div style="position:absolute;left:17px;top:619px;width:1178px;height:29px;background:#f8f8f8"></div>
<svg style="left:34px;top:628px" width="16" height="13" viewBox="0 0 16 13"><path d="M0.5 0.5 H12.5 V9.5 H0.5 Z" fill="#f6f6f6" stroke="#8797a8"/><path d="M3 2.5 H10 M3 4.5 H10 M3 6.5 H10" stroke="#8a99a9" stroke-width="1"/><path d="M8.3 8.6 L10.6 11 L14.4 6.6" fill="none" stroke="#fff" stroke-width="3.4" stroke-linecap="round" stroke-linejoin="round"/><path d="M8.3 8.6 L10.6 11 L14.4 6.6" fill="none" stroke="#22c022" stroke-width="2.1" stroke-linecap="round" stroke-linejoin="round"/></svg><div class="t s" style="left:93.38px;top:626px;font-size:13px;color:#3a3a3a;letter-spacing:0.530px;">март 2018</div>
<div class="t s" style="left:185.58px;top:626px;font-size:13px;color:#3a3a3a;letter-spacing:0.623px;">Разовое начисление</div>
<div class="t s" style="left:506.5px;top:626px;font-size:13px;color:#3a3a3a;letter-spacing:0.805px;">Тучков Ф.Ф., Ржевский Д.И.</div>
<div class="t s" style="left:966.38px;top:626px;font-size:13px;color:#3a3a3a;letter-spacing:0.500px;">1 999,00</div>
<div class="t s1" style="left:1138.5px;top:626px;font-size:13px;color:#3a3a3a;letter-spacing:0.200px;">260,00</div>
<svg style="left:34px;top:657px" width="16" height="13" viewBox="0 0 16 13"><path d="M0.5 0.5 H12.5 V9.5 H0.5 Z" fill="#f6f6f6" stroke="#8797a8"/><path d="M3 2.5 H10 M3 4.5 H10 M3 6.5 H10" stroke="#8a99a9" stroke-width="1"/><path d="M8.3 8.6 L10.6 11 L14.4 6.6" fill="none" stroke="#fff" stroke-width="3.4" stroke-linecap="round" stroke-linejoin="round"/><path d="M8.3 8.6 L10.6 11 L14.4 6.6" fill="none" stroke="#22c022" stroke-width="2.1" stroke-linecap="round" stroke-linejoin="round"/></svg><div class="t s" style="left:93.38px;top:655px;font-size:13px;color:#3a3a3a;letter-spacing:0.530px;">март 2018</div>
<div class="t s" style="left:186.5px;top:655px;font-size:13px;color:#3a3a3a;letter-spacing:0.473px;">Доход в натуральной форме</div>
<div class="t s" style="left:506.5px;top:655px;font-size:13px;color:#3a3a3a;letter-spacing:0.749px;">Давыдов Д.В.</div>
<div class="t s" style="left:965.18px;top:655px;font-size:13px;color:#3a3a3a;letter-spacing:0.686px;">2 540,00</div>
<div style="position:absolute;left:17px;top:677px;width:152px;height:29px;background:#fcefa8"></div>
<div style="position:absolute;left:169px;top:677px;width:1026px;height:29px;background:#fdf6d3"></div>
<svg style="left:34px;top:686px" width="16" height="13" viewBox="0 0 16 13"><path d="M0.5 0.5 H12.5 V9.5 H0.5 Z" fill="#f6f6f6" stroke="#8797a8"/><path d="M3 2.5 H10 M3 4.5 H10 M3 6.5 H10" stroke="#8a99a9" stroke-width="1"/><path d="M8.3 8.6 L10.6 11 L14.4 6.6" fill="none" stroke="#fff" stroke-width="3.4" stroke-linecap="round" stroke-linejoin="round"/><path d="M8.3 8.6 L10.6 11 L14.4 6.6" fill="none" stroke="#22c022" stroke-width="2.1" stroke-linecap="round" stroke-linejoin="round"/></svg><div class="t s" style="left:93.38px;top:684px;font-size:13px;color:#111;letter-spacing:0.530px;">март 2018</div>
<div class="t s1" style="left:185.5px;top:684px;font-size:13px;color:#111;letter-spacing:0.160px;">Отпуск</div>
<div class="t s" style="left:505.58px;top:684px;font-size:13px;color:#111;letter-spacing:0.687px;">Балмашов Павел Андреевич</div>
<div class="t s" style="left:961.18px;top:684px;font-size:13px;color:#111;letter-spacing:0.644px;">-2 445,72</div>
<svg style="left:34px;top:715px" width="16" height="13" viewBox="0 0 16 13"><path d="M0.5 0.5 H12.5 V9.5 H0.5 Z" fill="#f6f6f6" stroke="#8797a8"/><path d="M3 2.5 H10 M3 4.5 H10 M3 6.5 H10" stroke="#8a99a9" stroke-width="1"/><path d="M8.3 8.6 L10.6 11 L14.4 6.6" fill="none" stroke="#fff" stroke-width="3.4" stroke-linecap="round" stroke-linejoin="round"/><path d="M8.3 8.6 L10.6 11 L14.4 6.6" fill="none" stroke="#22c022" stroke-width="2.1" stroke-linecap="round" stroke-linejoin="round"/></svg><div class="t s" style="left:93.38px;top:713px;font-size:13px;color:#3a3a3a;letter-spacing:0.530px;">март 2018</div>
<div class="t s" style="left:185.58px;top:713px;font-size:13px;color:#3a3a3a;letter-spacing:0.584px;">Больничный лист</div>
<div class="t s" style="left:505.58px;top:713px;font-size:13px;color:#3a3a3a;letter-spacing:0.642px;">Крючков Иван Петрович</div>
<div class="t s" style="left:965.48px;top:713px;font-size:13px;color:#3a3a3a;letter-spacing:0.640px;">9 205,44</div>
<div style="position:absolute;left:1099px;top:745px;width:97px;height:21px;border:1px solid #a8a8a8;border-top:none;background:#fff"></div>
<div style="position:absolute;left:1100px;top:745px;width:23px;height:20px;background:linear-gradient(#fff 40%,#ececec)"></div>
<div style="position:absolute;left:1124px;top:745px;width:23px;height:20px;background:linear-gradient(#fff 40%,#ececec)"></div>
<div style="position:absolute;left:1123px;top:745px;width:1px;height:20px;background:#a8a8a8"></div>
<div style="position:absolute;left:1147px;top:745px;width:1px;height:20px;background:#a8a8a8"></div>
<div style="position:absolute;left:1171px;top:745px;width:1px;height:20px;background:#a8a8a8"></div>
<svg style="left:1107px;top:752px" width="10" height="7" viewBox="0 0 10 7"><rect x="0" y="0" width="9" height="1.3" fill="#222"/><path d="M0 6.5 L4.5 1.8 L9 6.5 Z" fill="#222"/></svg><svg style="left:1131px;top:753px" width="10" height="6" viewBox="0 0 10 6"><path d="M0 5.5 L4.5 0.5 L9 5.5 Z" fill="#222"/></svg><svg style="left:1155px;top:753px" width="10" height="6" viewBox="0 0 10 6"><path d="M0 0.5 L4.5 5.5 L9 0.5 Z" fill="#b4b4b4"/></svg><svg style="left:1179px;top:753px" width="10" height="7" viewBox="0 0 10 7"><path d="M0 0 L4.5 4.7 L9 0 Z" fill="#b4b4b4"/><rect x="0" y="5.5" width="9" height="1.3" fill="#b4b4b4"/></svg></body></html>
